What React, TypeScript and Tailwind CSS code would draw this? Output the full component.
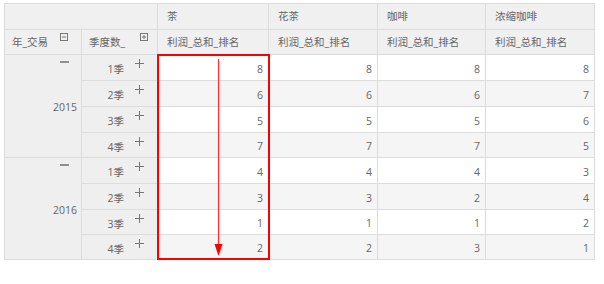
import React from "react";

const cols = ["茶", "花茶", "咖啡", "浓缩咖啡"];
const data = [
  [8, 8, 8, 8],
  [6, 6, 6, 7],
  [5, 5, 5, 6],
  [7, 7, 7, 5],
  [4, 4, 4, 3],
  [3, 3, 2, 4],
  [1, 1, 1, 2],
  [2, 2, 3, 1],
];

function BoxIcon({ plus }: { plus?: boolean }) {
  return (
    <svg width="8" height="8" viewBox="0 0 8 8" className="block">
      <rect x="0.5" y="0.5" width="7" height="7" fill="none" stroke="#777" strokeWidth="1" />
      <line x1="2" y1="4" x2="6" y2="4" stroke="#777" strokeWidth="1" />
      {plus && <line x1="4" y1="2" x2="4" y2="6" stroke="#777" strokeWidth="1" />}
    </svg>
  );
}

function Plus() {
  return (
    <svg width="9" height="9" viewBox="0 0 9 9" className="block">
      <line x1="0" y1="4.5" x2="9" y2="4.5" stroke="#777" strokeWidth="1" />
      <line x1="4.5" y1="0" x2="4.5" y2="9" stroke="#777" strokeWidth="1" />
    </svg>
  );
}

function Dash() {
  return (
    <svg width="9" height="2" viewBox="0 0 9 2" className="block">
      <line x1="0" y1="1" x2="9" y2="1" stroke="#666" strokeWidth="1.4" />
    </svg>
  );
}

export default function App() {
  const font = { fontFamily: '"Open Sans", "Noto Sans CJK SC", sans-serif' };
  return (
    <div className="w-[604px] h-[284px] bg-white pt-[3px] pl-[4px]" style={font}>
      <div className="relative w-[591px]">
        <div className="grid grid-cols-[76px_75px_110px_108px_107px_108px] grid-rows-[25px_24px_25px_25px_25px_24px_25px_25px_24px_24px] gap-px p-px bg-[#dcdcdc] text-[10.5px] leading-none text-[#666]">
          {/* header row 1 */}
          <div className="col-span-2 bg-[#f0f0f0]" />
          {cols.map((c) => (
            <div key={c} className="bg-[#f0f0f0] flex items-center pl-[9px]">
              {c}
            </div>
          ))}
          {/* header row 2 */}
          <div className="bg-[#f0f0f0] flex items-start">
            <span className="pl-[7px] pt-[7px]">年_交易</span>
            <span className="ml-auto mr-[13px] mt-[3px]"><BoxIcon /></span>
          </div>
          <div className="bg-[#f0f0f0] flex items-start">
            <span className="pl-[7px] pt-[7px]">季度数_</span>
            <span className="ml-auto mr-[9px] mt-[3px]"><BoxIcon plus /></span>
          </div>
          {cols.map((c) => (
            <div key={c} className="bg-[#f0f0f0] flex items-center pl-[9px]">
              利润_总和_排名
            </div>
          ))}
          {/* body */}
          {data.map((row, i) => (
            <React.Fragment key={i}>
              {i % 4 === 0 && (
                <div className="row-span-4 bg-[#efefef] flex flex-col items-end pr-[4px]">
                  <span className="mt-[6px] mr-[8px]"><Dash /></span>
                  <span className="mt-[39px]">{i === 0 ? "2015" : "2016"}</span>
                </div>
              )}
              <div className="bg-[#efefef] flex items-start justify-end">
                <span className="pt-[9px]">{(i % 4) + 1}季</span>
                <span className="ml-[11px] mr-[13px] mt-[4px]"><Plus /></span>
              </div>
              {row.map((v, j) => (
                <div
                  key={j}
                  className={`${i % 2 === 0 ? "bg-white" : "bg-[#f5f5f5]"} flex items-center justify-end pr-[5px] pt-[3px]`}
                >
                  {v}
                </div>
              ))}
            </React.Fragment>
          ))}
        </div>
        <div className="absolute left-[153px] top-[51px] w-[113px] h-[206px] border-2 border-[#ff0000] pointer-events-none">
          <svg width="113" height="206" viewBox="0 0 113 206" className="absolute -left-[2px] -top-[2px]">
            <line x1="61.5" y1="5" x2="61.5" y2="196" stroke="#ff3030" strokeWidth="1.2" />
            <polygon points="57.5,190 65.5,190 61.5,202" fill="#ff0000" />
          </svg>
        </div>
      </div>
    </div>
  );
}
